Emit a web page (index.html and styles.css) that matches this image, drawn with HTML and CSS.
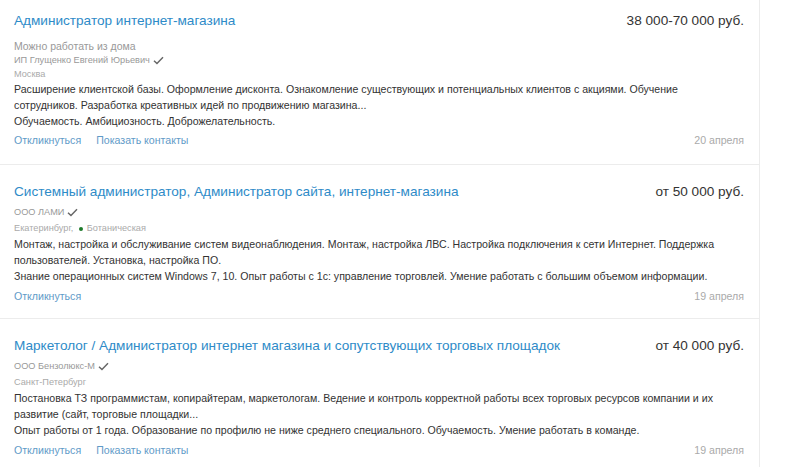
FILE: index.html
```html
<!DOCTYPE html>
<html lang="ru">
<head>
<meta charset="utf-8">
<link rel="stylesheet" href="styles.css">
</head>
<body>
<div class="list">
  <div class="card">
    <div class="head">
      <a class="title" href="#">Администратор интернет-магазина</a>
      <span class="salary">38 000-70 000 руб.</span>
    </div>
    <div class="remote">Можно работать из дома</div>
    <div class="company">ИП Глущенко Евгений Юрьевич <svg class="check" width="11" height="9" viewBox="0 0 12 10"><path d="M1 5.2 L4.3 8.3 L11 1.3" fill="none" stroke="#666" stroke-width="1.6"/></svg></div>
    <div class="city">Москва</div>
    <div class="desc">Расширение клиентской базы. Оформление дисконта. Ознакомление существующих и потенциальных клиентов с акциями. Обучение сотрудников. Разработка креативных идей по продвижению магазина...<br>Обучаемость. Амбициозность. Доброжелательность.</div>
    <div class="foot">
      <div class="links"><a href="#">Откликнуться</a><a href="#">Показать контакты</a></div>
      <span class="date">20 апреля</span>
    </div>
  </div>
  <div class="card">
    <div class="head">
      <a class="title" href="#">Системный администратор, Администратор сайта, интернет-магазина</a>
      <span class="salary">от 50 000 руб.</span>
    </div>
    <div class="company">ООО ЛАМИ <svg class="check" width="11" height="9" viewBox="0 0 12 10"><path d="M1 5.2 L4.3 8.3 L11 1.3" fill="none" stroke="#666" stroke-width="1.6"/></svg></div>
    <div class="city">Екатеринбург, <span class="metro"></span>Ботаническая</div>
    <div class="desc">Монтаж, настройка и обслуживание систем видеонаблюдения. Монтаж, настройка ЛВС. Настройка подключения к сети Интернет. Поддержка пользователей. Установка, настройка ПО.<br>Знание операционных систем Windows 7, 10. Опыт работы с 1с: управление торговлей. Умение работать с большим объемом информации.</div>
    <div class="foot">
      <div class="links"><a href="#">Откликнуться</a></div>
      <span class="date">19 апреля</span>
    </div>
  </div>
  <div class="card">
    <div class="head">
      <a class="title" href="#">Маркетолог / Администратор интернет магазина и сопутствующих торговых площадок</a>
      <span class="salary">от 40 000 руб.</span>
    </div>
    <div class="company">ООО Бензолюкс-М <svg class="check" width="11" height="9" viewBox="0 0 12 10"><path d="M1 5.2 L4.3 8.3 L11 1.3" fill="none" stroke="#666" stroke-width="1.6"/></svg></div>
    <div class="city">Санкт-Петербург</div>
    <div class="desc">Постановка ТЗ программистам, копирайтерам, маркетологам. Ведение и контроль корректной работы всех торговых ресурсов компании и их развитие (сайт, торговые площадки...<br>Опыт работы от 1 года. Образование по профилю не ниже среднего специального. Обучаемость. Умение работать в команде.</div>
    <div class="foot">
      <div class="links"><a href="#">Откликнуться</a><a href="#">Показать контакты</a></div>
      <span class="date">19 апреля</span>
    </div>
  </div>
</div>
</body>
</html>
```

FILE: styles.css
```css
html, body {
  margin: 0;
  padding: 0;
  background: #fff;
}
body {
  font-family: "Liberation Sans", Arial, sans-serif;
  color: #333;
  overflow: hidden;
}
.list {
  width: 760px;
  border-right: 1px solid #ececec;
  min-height: 467px;
  box-sizing: border-box;
}
.card {
  padding: 17px 15px 15px 14px;
  border-bottom: 1px solid #ececec;
}
.card:first-child {
  padding-top: 11px;
  padding-bottom: 17px;
}
.head {
  display: flex;
  justify-content: space-between;
  align-items: baseline;
  line-height: 20px;
}
.title {
  font-size: 13.6px;
  color: #2e8bc8;
  text-decoration: none;
}
.salary {
  font-size: 13.6px;
  color: #333;
  white-space: nowrap;
}
.remote {
  margin-top: 8px;
  font-size: 10.5px;
  line-height: 14px;
  color: #999;
}
.company {
  margin-top: 3px;
  font-size: 9.2px;
  line-height: 14px;
  color: #999;
  display: flex;
  align-items: center;
  gap: 3px;
}
.remote + .company {
  margin-top: 0;
}
.check {
  display: block;
}
.city {
  margin-top: 2px;
  font-size: 9.2px;
  line-height: 15px;
  color: #aaa;
  display: flex;
  align-items: center;
  white-space: pre;
}
.remote ~ .city {
  margin-top: 0;
  line-height: 14px;
}
.metro {
  display: inline-block;
  width: 4px;
  height: 4px;
  border-radius: 50%;
  background: #1d7a2a;
  margin: 0 4px 0 3px;
}
.desc {
  font-size: 10.6px;
  line-height: 16px;
  color: #333;
}
.foot {
  margin-top: 5px;
  display: flex;
  justify-content: space-between;
  font-size: 10.6px;
  line-height: 14px;
}
.remote ~ .foot {
  margin-top: 4px;
}
.links {
  display: flex;
  gap: 15px;
}
.links a {
  color: #5f9bc8;
  text-decoration: none;
}
.date {
  color: #aaa;
}
```
